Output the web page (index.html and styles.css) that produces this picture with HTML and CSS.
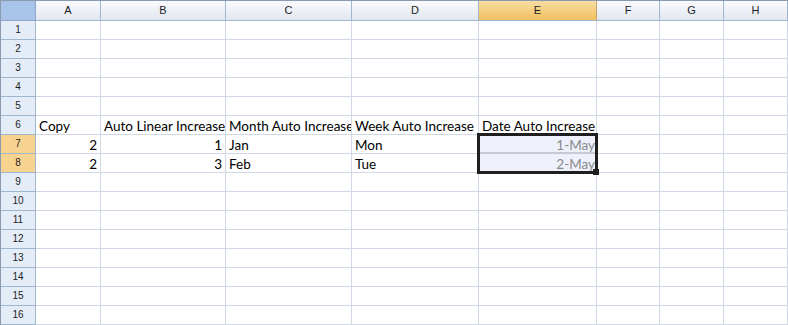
FILE: index.html
```html
<!DOCTYPE html>
<html lang="en">
<head>
  <meta charset="UTF-8">
  <title>Auto Fill</title>
  <link rel="stylesheet" href="styles.css">
</head>
<body>

  <div class="sheet">
    <div class="grid">
      <!-- column headers -->
      <div class="corner"></div>
      <div class="colhead">A</div>
      <div class="colhead">B</div>
      <div class="colhead">C</div>
      <div class="colhead">D</div>
      <div class="colhead active">E</div>
      <div class="colhead">F</div>
      <div class="colhead">G</div>
      <div class="colhead">H</div>

      <div class="rowhead">1</div><div class="cell"></div><div class="cell"></div><div class="cell"></div><div class="cell"></div><div class="cell"></div><div class="cell"></div><div class="cell"></div><div class="cell"></div>
      <div class="rowhead">2</div><div class="cell"></div><div class="cell"></div><div class="cell"></div><div class="cell"></div><div class="cell"></div><div class="cell"></div><div class="cell"></div><div class="cell"></div>
      <div class="rowhead">3</div><div class="cell"></div><div class="cell"></div><div class="cell"></div><div class="cell"></div><div class="cell"></div><div class="cell"></div><div class="cell"></div><div class="cell"></div>
      <div class="rowhead">4</div><div class="cell"></div><div class="cell"></div><div class="cell"></div><div class="cell"></div><div class="cell"></div><div class="cell"></div><div class="cell"></div><div class="cell"></div>
      <div class="rowhead">5</div><div class="cell"></div><div class="cell"></div><div class="cell"></div><div class="cell"></div><div class="cell"></div><div class="cell"></div><div class="cell"></div><div class="cell"></div>

      <div class="rowhead">6</div>
      <div class="cell">Copy</div>
      <div class="cell">Auto Linear Increase</div>
      <div class="cell">Month Auto Increase</div>
      <div class="cell">Week Auto Increase</div>
      <div class="cell">Date Auto Increase</div>
      <div class="cell"></div><div class="cell"></div><div class="cell"></div>

      <div class="rowhead active">7</div>
      <div class="cell num">2</div>
      <div class="cell num">1</div>
      <div class="cell">Jan</div>
      <div class="cell">Mon</div>
      <div class="cell num sel first">1-May</div>
      <div class="cell"></div><div class="cell"></div><div class="cell"></div>

      <div class="rowhead active">8</div>
      <div class="cell num">2</div>
      <div class="cell num">3</div>
      <div class="cell">Feb</div>
      <div class="cell">Tue</div>
      <div class="cell num sel">2-May</div>
      <div class="cell"></div><div class="cell"></div><div class="cell"></div>

      <div class="rowhead">9</div><div class="cell"></div><div class="cell"></div><div class="cell"></div><div class="cell"></div><div class="cell"></div><div class="cell"></div><div class="cell"></div><div class="cell"></div>
      <div class="rowhead">10</div><div class="cell"></div><div class="cell"></div><div class="cell"></div><div class="cell"></div><div class="cell"></div><div class="cell"></div><div class="cell"></div><div class="cell"></div>
      <div class="rowhead">11</div><div class="cell"></div><div class="cell"></div><div class="cell"></div><div class="cell"></div><div class="cell"></div><div class="cell"></div><div class="cell"></div><div class="cell"></div>
      <div class="rowhead">12</div><div class="cell"></div><div class="cell"></div><div class="cell"></div><div class="cell"></div><div class="cell"></div><div class="cell"></div><div class="cell"></div><div class="cell"></div>
      <div class="rowhead">13</div><div class="cell"></div><div class="cell"></div><div class="cell"></div><div class="cell"></div><div class="cell"></div><div class="cell"></div><div class="cell"></div><div class="cell"></div>
      <div class="rowhead">14</div><div class="cell"></div><div class="cell"></div><div class="cell"></div><div class="cell"></div><div class="cell"></div><div class="cell"></div><div class="cell"></div><div class="cell"></div>
      <div class="rowhead">15</div><div class="cell"></div><div class="cell"></div><div class="cell"></div><div class="cell"></div><div class="cell"></div><div class="cell"></div><div class="cell"></div><div class="cell"></div>
      <div class="rowhead">16</div><div class="cell"></div><div class="cell"></div><div class="cell"></div><div class="cell"></div><div class="cell"></div><div class="cell"></div><div class="cell"></div><div class="cell"></div>
    </div>

    <!-- selection box over E7:E8 -->
    <div class="selection"><span class="handle"></span></div>
  </div>

</body>
</html>
```

FILE: styles.css
```css
body {
  margin: 0;
  background: #fff;
}
.sheet {
  position: relative;
  width: 788px;
  height: 325px;
  overflow: hidden;
}
.grid {
  display: grid;
  grid-template-columns: 35px 65px 125px 126px 127px 118px 63px 64px 64px;
  grid-template-rows: 20px;
  grid-auto-rows: 19px;
  border-top: 1px solid #8a9bb0;
  border-left: 1px solid #8a9bb0;
}
.grid > div {
  box-sizing: border-box;
  border-right: 1px solid #d0d7e5;
  border-bottom: 1px solid #d0d7e5;
  overflow: hidden;
  white-space: nowrap;
}
.corner {
  background: #a9c4e9;
  border-right-color: #8ea6c2 !important;
  border-bottom-color: #8ea6c2 !important;
}
.colhead {
  background: linear-gradient(#f9fafd, #e1e6ef);
  border-right-color: #9eb6ce !important;
  border-bottom-color: #9eb6ce !important;
  font-family: "Liberation Sans", Arial, sans-serif;
  font-size: 11px;
  color: #1e1e1e;
  text-align: center;
  line-height: 19px;
}
.colhead.active {
  background: linear-gradient(#f9dca3, #f1c15f);
  border-right-color: #c2a26a !important;
}
.rowhead {
  background: #e4ecf7;
  border-right-color: #9eb6ce !important;
  border-bottom-color: #9eb6ce !important;
  font-family: "Liberation Sans", Arial, sans-serif;
  font-size: 10px;
  color: #1e1e1e;
  text-align: center;
  line-height: 18px;
}
.rowhead.active {
  background: #f8d390;
}
.cell {
  font-family: Lato, "Open Sans", sans-serif;
  font-size: 13.5px;
  color: #000;
  line-height: 20px;
  padding: 0 3px;
}
.num {
  text-align: right;
}
.sel {
  background: #eef1fb;
  color: #8a8a8a;
  padding-right: 1px;
}
.sel.first {
  border-bottom: 1px solid #c7cad2 !important;
  box-shadow: inset 0 -1px 0 #c7cad2;
}
.selection {
  position: absolute;
  left: 477px;
  top: 133px;
  width: 121px;
  height: 41px;
  box-sizing: border-box;
  border: 3px solid #1f1f1f;
}
.handle {
  position: absolute;
  left: 113px;
  top: 33px;
  width: 6px;
  height: 6px;
  background: #1f1f1f;
}
```
